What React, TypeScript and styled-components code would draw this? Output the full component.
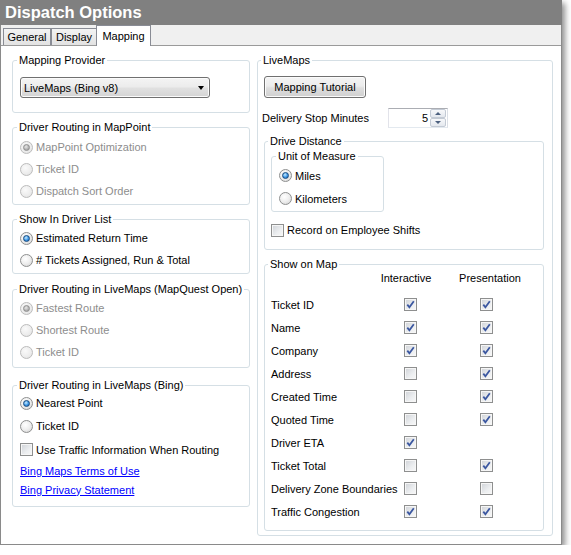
import { Fragment } from "react";
import styled, { createGlobalStyle } from "styled-components";

const GlobalStyle = createGlobalStyle`
  body {
    margin: 0;
    background: #ffffff;
    font-family: "Liberation Sans", Arial, sans-serif;
    font-size: 11px;
    color: #000000;
  }
`;

const Window = styled.div`
  width: 562px;
  height: 545px;
  box-sizing: border-box;
  border: 1px solid #8a8a8a;
  border-top: none;
  background: #ffffff;
  box-shadow: 3px 3px 6px rgba(0, 0, 0, 0.45);
  display: flex;
  flex-direction: column;
`;

const TitleBar = styled.div`
  flex: none;
  height: 25px;
  margin: 0 -1px;
  padding-left: 5px;
  background: #808080;
  color: #ffffff;
  font-weight: bold;
  font-size: 16.5px;
  line-height: 25px;
`;

const TabStrip = styled.div`
  flex: none;
  height: 20px;
  display: flex;
  align-items: flex-end;
  padding-left: 2px;
  background: #f0f0f0;
  border-bottom: 1px solid #9a9a9a;
`;

const Tab = styled.div<{ $w: number; $active?: boolean }>`
  width: ${(p) => p.$w}px;
  height: ${(p) => (p.$active ? 21 : 17)}px;
  box-sizing: border-box;
  margin-left: ${(p) => (p.$active ? -1 : 0)}px;
  margin-bottom: ${(p) => (p.$active ? -1 : 0)}px;
  border: 1px solid #898c95;
  border-bottom: none;
  background: ${(p) => (p.$active ? "#ffffff" : "linear-gradient(#f3f3f3, #e2e2e2)")};
  display: flex;
  align-items: center;
  justify-content: center;
`;

const Body = styled.div`
  flex: 1;
  display: grid;
  grid-template-columns: 238px 296px;
  column-gap: 7px;
  align-items: start;
  padding: 7px 8px 0 11px;
`;

const Column = styled.div`
  display: flex;
  flex-direction: column;
`;

const Group = styled.fieldset<{ $pad: string; $top?: number; $w?: number }>`
  margin: ${(p) => p.$top ?? 0}px 0 0;
  padding: ${(p) => p.$pad};
  min-width: 0;
  border: 1px solid #d5dfe5;
  border-radius: 3px;
  ${(p) => (p.$w ? `width: ${p.$w}px; box-sizing: border-box;` : "")}
`;

const Caption = styled.legend`
  padding: 0 2px;
  margin-left: -3px;
  line-height: 14px;
`;

const Option = styled.div<{ $h: number; $dim?: boolean; $top?: number }>`
  height: ${(p) => p.$h}px;
  margin-top: ${(p) => p.$top ?? 0}px;
  display: flex;
  align-items: center;
  gap: 3px;
  white-space: nowrap;
  color: ${(p) => (p.$dim ? "#8d8d8d" : "#000000")};
`;

const RadioMark = styled.span<{ $on?: boolean; $dim?: boolean }>`
  flex: none;
  width: 13px;
  height: 13px;
  box-sizing: border-box;
  border-radius: 50%;
  border: 1px solid ${(p) => (p.$dim ? "#bcbcbc" : "#8e8f8f")};
  background: ${(p) =>
    p.$dim
      ? "radial-gradient(circle at 40% 35%, #fafafa, #ececec 60%, #dcdcdc)"
      : "radial-gradient(circle at 40% 35%, #ffffff, #eeeeee 50%, #cfcfcf)"};
  display: flex;
  align-items: center;
  justify-content: center;

  &::after {
    content: "";
    display: ${(p) => (p.$on ? "block" : "none")};
    width: 7px;
    height: 7px;
    box-sizing: border-box;
    border-radius: 50%;
    border: 1px solid ${(p) => (p.$dim ? "#8f8f8f" : "#174a7e")};
    background: ${(p) =>
      p.$dim
        ? "radial-gradient(circle at 40% 35%, #e8e8e8, #a8a8a8 70%)"
        : "radial-gradient(circle at 40% 35%, #c8ecff, #3a95e6 55%, #1c5fa3)"};
  }
`;

const Box = styled.span`
  flex: none;
  width: 13px;
  height: 13px;
  box-sizing: border-box;
  border: 1px solid #8e8f8f;
  box-shadow: inset 0 0 0 1px #f6f6f6;
  background: linear-gradient(135deg, #cfd2d7 0%, #eceef0 60%, #f8f8f8 100%);
  display: flex;
  align-items: center;
  justify-content: center;
`;

const Link = styled.a`
  color: #0000ff;
  text-decoration: underline;
`;

const Dropdown = styled.div`
  width: 190px;
  height: 21px;
  box-sizing: border-box;
  border: 1px solid #707070;
  border-radius: 3px;
  background: linear-gradient(#f4f4f4 0%, #ececec 45%, #e0e0e0 55%, #d4d4d4 100%);
  box-shadow: inset 0 0 0 1px #fbfbfb;
  display: flex;
  align-items: center;
  justify-content: space-between;
  padding: 0 5px 0 3px;
`;

const DropArrow = styled.span`
  width: 0;
  height: 0;
  border-left: 3.5px solid transparent;
  border-right: 3.5px solid transparent;
  border-top: 4px solid #000000;
`;

const PushButton = styled.div`
  width: 102px;
  height: 22px;
  box-sizing: border-box;
  border: 1px solid #707070;
  border-radius: 3px;
  background: linear-gradient(#f4f4f4 0%, #ececec 45%, #dedede 55%, #d0d0d0 100%);
  box-shadow: inset 0 0 0 1px #fbfbfb;
  display: flex;
  align-items: center;
  justify-content: center;
`;

const Field = styled.div`
  height: 20px;
  margin-top: 10px;
  display: flex;
  align-items: center;
`;

const FieldLabel = styled.span`
  width: 126px;
  margin-left: -2px;
`;

const Spinner = styled.div`
  width: 60px;
  height: 20px;
  box-sizing: border-box;
  border: 1px solid;
  border-color: #abadb3 #dbdfe6 #e3e9ef #e2e3ea;
  padding: 0 1px;
  display: flex;
`;

const SpinValue = styled.span`
  flex: 1;
  text-align: right;
  padding-right: 2px;
  line-height: 18px;
`;

const SpinButtons = styled.div`
  width: 16px;
  display: flex;
  flex-direction: column;
`;

const SpinButton = styled.div`
  height: 9px;
  box-sizing: border-box;
  border: 1px solid #c3cad4;
  border-radius: 2px;
  background: linear-gradient(#f7f8fa, #e4e8ee);
  display: flex;
  align-items: center;
  justify-content: center;
`;

const SpinArrow = styled.span<{ $down?: boolean }>`
  width: 0;
  height: 0;
  border-left: 3px solid transparent;
  border-right: 3px solid transparent;
  ${(p) => (p.$down ? "border-top" : "border-bottom")}: 3px solid #4c607f;
`;

const MapGrid = styled.div`
  display: grid;
  grid-template-columns: 98px 70px 70px;
  column-gap: 6px;
  grid-template-rows: 22px;
  grid-auto-rows: 23px;
  align-items: center;
`;

const ColHead = styled.div<{ $lean: "left" | "right" }>`
  align-self: start;
  line-height: 14px;
  text-align: center;
  white-space: nowrap;
  ${(p) => (p.$lean === "left" ? "padding-right: 8px;" : "padding-left: 8px;")}
`;

const RowName = styled.div`
  white-space: nowrap;
`;

const Cell = styled.div`
  display: flex;
  justify-content: center;
`;

const Tick = () => (
  <svg width="11" height="11" viewBox="0 0 11 11">
    <path d="M2.3 5.6 L4.4 8.2 L8.8 2.2" fill="none" stroke="#3b57a0" strokeWidth="1.8" />
  </svg>
);

const Check = ({ on }: { on?: boolean }) => <Box>{on && <Tick />}</Box>;

const Radio = ({ label, on, dim, h = 22 }: { label: string; on?: boolean; dim?: boolean; h?: number }) => (
  <Option $h={h} $dim={dim}>
    <RadioMark $on={on} $dim={dim} />
    {label}
  </Option>
);

const mapRows: [string, boolean, boolean | null][] = [
  ["Ticket ID", true, true],
  ["Name", true, true],
  ["Company", true, true],
  ["Address", false, true],
  ["Created Time", false, true],
  ["Quoted Time", false, true],
  ["Driver ETA", true, null],
  ["Ticket Total", false, true],
  ["Delivery Zone Boundaries", false, false],
  ["Traffic Congestion", true, true],
];

export default function App() {
  return (
    <>
      <GlobalStyle />
      <Window>
        <TitleBar>Dispatch Options</TitleBar>
        <TabStrip>
          <Tab $w={48}>General</Tab>
          <Tab $w={46}>Display</Tab>
          <Tab $w={55} $active>
            Mapping
          </Tab>
        </TabStrip>
        <Body>
          <Column>
            <Group $pad="10px 0 14px 7px">
              <Caption>Mapping Provider</Caption>
              <Dropdown>
                LiveMaps (Bing v8)
                <DropArrow />
              </Dropdown>
            </Group>

            <Group $pad="2px 0 2px 7px" $top={7}>
              <Caption>Driver Routing in MapPoint</Caption>
              <Radio label="MapPoint Optimization" on dim />
              <Radio label="Ticket ID" dim />
              <Radio label="Dispatch Sort Order" dim />
            </Group>

            <Group $pad="1px 0 2px 7px" $top={7}>
              <Caption>Show In Driver List</Caption>
              <Radio label="Estimated Return Time" on />
              <Radio label="# Tickets Assigned, Run & Total" />
            </Group>

            <Group $pad="1px 0 4px 7px" $top={8}>
              <Caption>Driver Routing in LiveMaps (MapQuest Open)</Caption>
              <Radio label="Fastest Route" on dim />
              <Radio label="Shortest Route" dim />
              <Radio label="Ticket ID" dim />
            </Group>

            <Group $pad="0 0 7px 7px" $top={10}>
              <Caption>Driver Routing in LiveMaps (Bing)</Caption>
              <Radio label="Nearest Point" on h={22} />
              <Radio label="Ticket ID" h={24} />
              <Option $h={23}>
                <Check />
                Use Traffic Information When Routing
              </Option>
              <Option $h={19}>
                <Link href="#">Bing Maps Terms of Use</Link>
              </Option>
              <Option $h={19}>
                <Link href="#">Bing Privacy Statement</Link>
              </Option>
            </Group>
          </Column>

          <Group $pad="9px 8px 4px 6px">
            <Caption>LiveMaps</Caption>
            <PushButton>Mapping Tutorial</PushButton>
            <Field>
              <FieldLabel>Delivery Stop Minutes</FieldLabel>
              <Spinner>
                <SpinValue>5</SpinValue>
                <SpinButtons>
                  <SpinButton>
                    <SpinArrow />
                  </SpinButton>
                  <SpinButton>
                    <SpinArrow $down />
                  </SpinButton>
                </SpinButtons>
              </Spinner>
            </Field>

            <Group $pad="1px 0 8px 6px" $top={6}>
              <Caption>Drive Distance</Caption>
              <Group $pad="1px 0 1px 7px" $w={113}>
                <Caption>Unit of Measure</Caption>
                <Radio label="Miles" on h={23} />
                <Radio label="Kilometers" h={23} />
              </Group>
              <Option $h={22} $top={7}>
                <Check />
                Record on Employee Shifts
              </Option>
            </Group>

            <Group $pad="0 0 7px 6px" $top={7}>
              <Caption>Show on Map</Caption>
              <MapGrid>
                <div />
                <ColHead $lean="left">Interactive</ColHead>
                <ColHead $lean="right">Presentation</ColHead>
                {mapRows.map(([name, live, print]) => (
                  <Fragment key={name}>
                    <RowName>{name}</RowName>
                    <Cell>
                      <Check on={live} />
                    </Cell>
                    <Cell>{print !== null && <Check on={print} />}</Cell>
                  </Fragment>
                ))}
              </MapGrid>
            </Group>
          </Group>
        </Body>
      </Window>
    </>
  );
}
